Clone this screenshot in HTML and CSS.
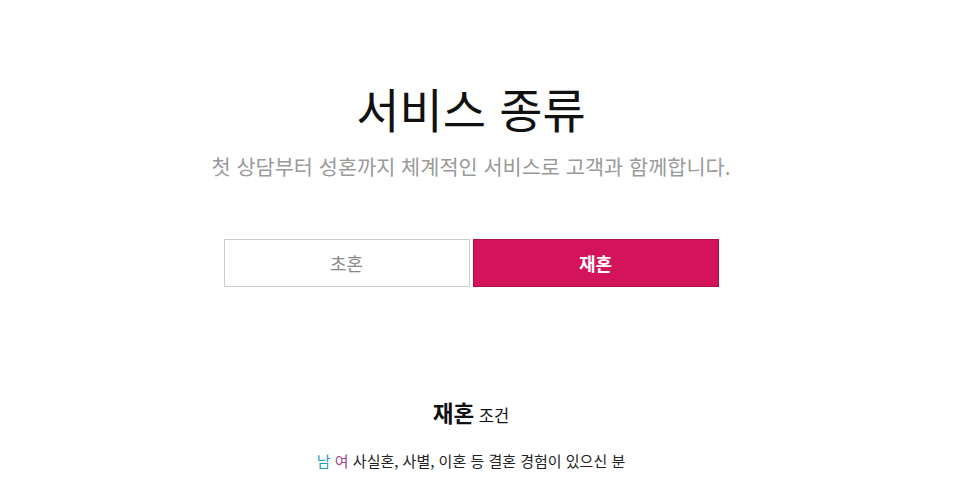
FILE: index.html
```html
<!DOCTYPE html>
<html lang="ko">
<head>
  <meta charset="UTF-8" />
  <meta name="viewport" content="width=device-width, initial-scale=1.0" />
  <title>서비스 종류</title>
  <link rel="stylesheet" href="styles.css">
</head>
<body>

  <div class="service">
    <h2 class="service-title">서비스 종류</h2>
    <p class="service-desc">첫 상담부터 성혼까지 체계적인 서비스로 고객과 함께합니다.</p>

    <div class="tabs">
      <button class="tab">초혼</button>
      <button class="tab active">재혼</button>
    </div>

    <div class="condition">
      <h3 class="condition-title"><strong>재혼</strong> 조건</h3>
      <p class="condition-text"><span class="male">남</span> <span class="female">여</span> 사실혼, 사별, 이혼 등 결혼 경험이 있으신 분</p>
    </div>
  </div>

</body>
</html>
```

FILE: styles.css
```css
body {
  font-family: "Noto Sans CJK KR", "Noto Sans", sans-serif;
  background-color: #fff;
  color: #111;
  margin: 0;
}

.service {
  width: 942px;
  padding-top: 76px;
  display: flex;
  flex-direction: column;
  align-items: center;
}

.service-title {
  font-size: 47px;
  font-weight: 400;
  line-height: 64px;
  margin: 0;
}

.service-desc {
  font-size: 20.8px;
  color: #9a9a9a;
  line-height: 28px;
  margin: 12px 0 0;
}

.tabs {
  display: flex;
  gap: 3px;
  margin-top: 59px;
}

.tab {
  width: 246px;
  height: 48px;
  font-family: inherit;
  font-size: 18px;
  color: #888;
  background-color: #fff;
  border: 1px solid #ccc;
  cursor: pointer;
}

.tab.active {
  background-color: #d4145a;
  border-color: #b0104a;
  color: #fff;
  font-weight: 700;
}

.condition {
  margin-top: 109px;
  text-align: center;
}

.condition-title {
  font-size: 16.5px;
  font-weight: 400;
  margin: 0;
  line-height: 32px;
}

.condition-title strong {
  font-size: 22.5px;
  font-weight: 700;
}

.condition-text {
  font-size: 15px;
  color: #222;
  margin: 19px 0 0;
}

.male {
  color: #2b9cc0;
}

.female {
  color: #a0448a;
}
```
